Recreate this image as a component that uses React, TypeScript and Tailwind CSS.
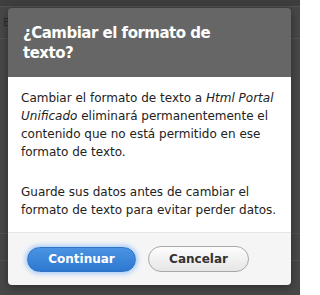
export default function App() {
  return (
    <div className="relative h-[295px] w-[300px] overflow-hidden bg-[#474747] font-['DejaVu_Sans',sans-serif]">
      {/* Dimmed page behind the dialog */}
      <div className="h-[7px] border-b border-[#525252] bg-[#3e3e3e]" />
      <div className="flex h-[32px] items-center border-b border-[#545454] pl-[3px]">
        <span className="text-[11px] leading-none text-[#2e2e2e]">E</span>
      </div>
      <div className="h-[195px] border-b border-[#535353]" />
      <div className="h-[27px] border-b border-[#535353]" />

      {/* Dialog */}
      <div className="absolute left-[8px] top-[8px] w-[283px] overflow-hidden rounded-[4px] shadow-[0_2px_8px_rgba(0,0,0,0.4)]">
        <div className="h-[69px] bg-[#666666] px-[15px] pt-[15px]">
          <h2 className="max-w-[200px] text-[15px] font-bold leading-[20px] tracking-[-0.5px] text-white">
            ¿Cambiar el formato de texto?
          </h2>
        </div>
        <div className="h-[155px] bg-white pl-[13px] pr-[10px] pt-[12px] text-[12px] leading-[18px] text-[#222]">
          <p>
            Cambiar el formato de texto a <em>Html Portal Unificado</em> eliminará permanentemente el contenido que no
            está permitido en ese formato de texto.
          </p>
          <p className="mt-[22px]">Guarde sus datos antes de cambiar el formato de texto para evitar perder datos.</p>
        </div>
        <div className="flex h-[53px] items-center gap-[12px] border-t border-[#e6e6e6] bg-[#f5f5f5] pl-[19px]">
          <button className="h-[25px] w-[109px] rounded-full border border-[#2d72c4] bg-gradient-to-b from-[#4b94e3] to-[#2d78d0] text-[12px] font-bold text-white shadow-[0_0_4px_2px_rgba(120,180,255,0.6)]">
            Continuar
          </button>
          <button className="h-[26px] w-[101px] rounded-full border border-[#a8a8a8] bg-gradient-to-b from-[#fdfdfd] to-[#e6e6e6] text-[12px] font-bold text-[#333]">
            Cancelar
          </button>
        </div>
      </div>
    </div>
  );
}
